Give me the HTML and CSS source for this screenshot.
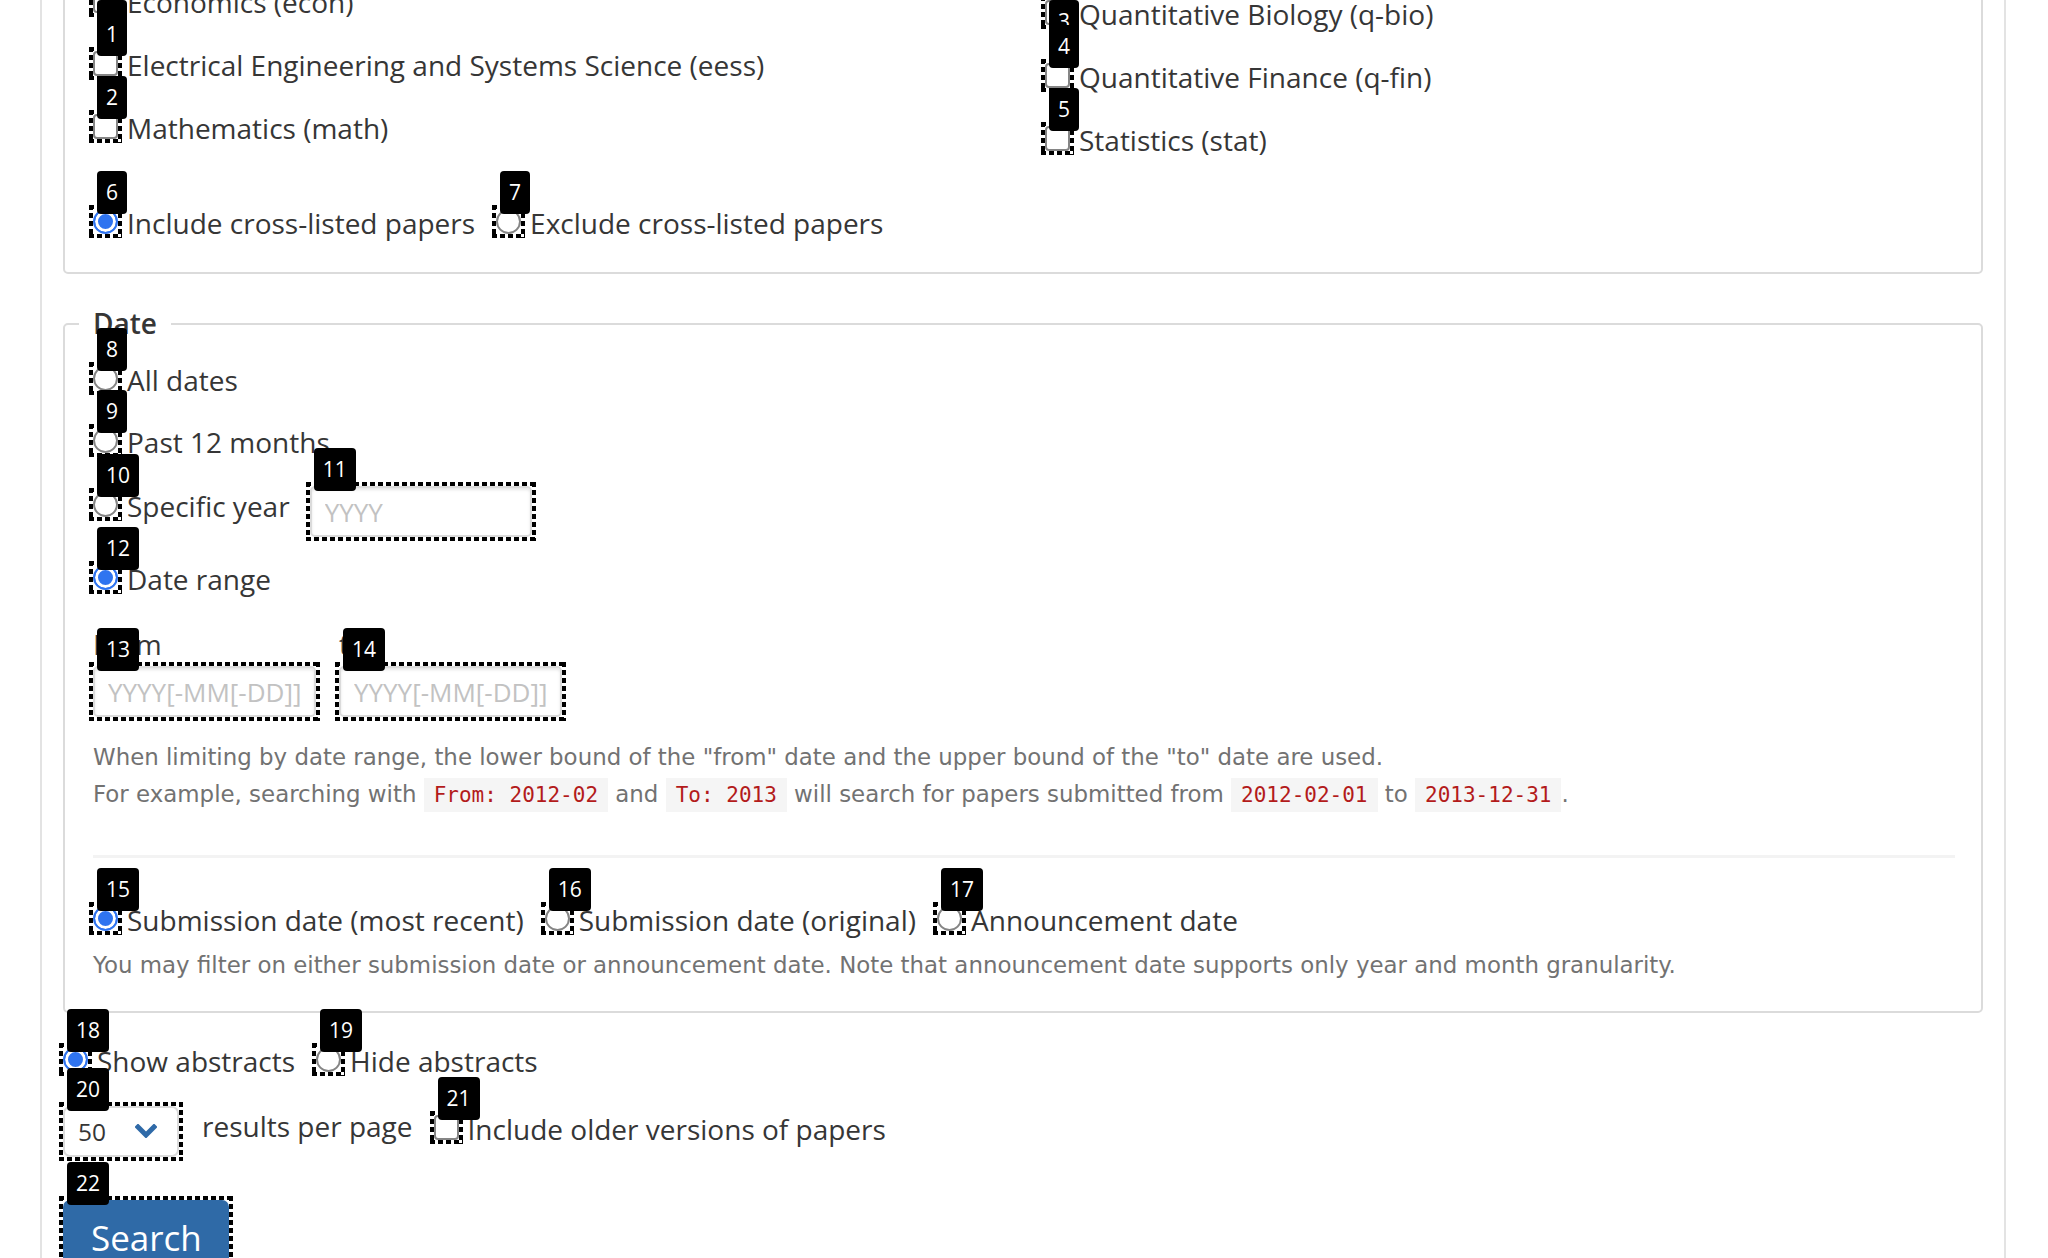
FILE: index.html
```html
<!DOCTYPE html>
<html lang="en">
<head>
<meta charset="utf-8">
<title>Advanced Search</title>
<link rel="stylesheet" href="styles.css">
</head>
<body>
<div class="page">
  <fieldset class="box subjects">
    <div class="cols">
      <div class="col">
        <label class="row"><span class="mk c"><input type="checkbox" class="ctl"><span class="badge pin-a">0</span></span><span>Economics (econ)</span></label>
        <label class="row"><span class="mk c"><input type="checkbox" class="ctl"><span class="badge">1</span></span><span>Electrical Engineering and Systems Science (eess)</span></label>
        <label class="row"><span class="mk c"><input type="checkbox" class="ctl"><span class="badge">2</span></span><span>Mathematics (math)</span></label>
      </div>
      <div class="col col-right">
        <label class="row"><span class="mk c"><input type="checkbox" class="ctl"><span class="badge pin-b">3</span></span><span>Quantitative Biology (q-bio)</span></label>
        <label class="row"><span class="mk c"><input type="checkbox" class="ctl"><span class="badge">4</span></span><span>Quantitative Finance (q-fin)</span></label>
        <label class="row"><span class="mk c"><input type="checkbox" class="ctl"><span class="badge">5</span></span><span>Statistics (stat)</span></label>
      </div>
    </div>
    <div class="opts cross">
      <label class="opt"><span class="mk c"><input type="radio" name="cross" class="ctl" checked><span class="badge">6</span></span><span>Include cross-listed papers</span></label>
      <label class="opt"><span class="mk c"><input type="radio" name="cross" class="ctl"><span class="badge">7</span></span><span>Exclude cross-listed papers</span></label>
    </div>
  </fieldset>

  <fieldset class="box dates">
    <legend>Date</legend>
    <label class="row"><span class="mk c"><input type="radio" name="date" class="ctl"><span class="badge">8</span></span><span>All dates</span></label>
    <label class="row d2"><span class="mk c"><input type="radio" name="date" class="ctl"><span class="badge">9</span></span><span>Past 12 months</span></label>
    <div class="opts d3">
      <label class="opt"><span class="mk c"><input type="radio" name="date" class="ctl"><span class="badge">10</span></span><span>Specific year</span></label>
      <span class="mk year"><input type="text" class="txt txt-year" placeholder="YYYY"><span class="badge">11</span></span>
    </div>
    <label class="row d4"><span class="mk c"><input type="radio" name="date" class="ctl" checked><span class="badge">12</span></span><span>Date range</span></label>
    <div class="range">
      <div class="fld">
        <label class="flabel">From</label>
        <span class="mk"><input type="text" class="txt" placeholder="YYYY[-MM[-DD]]"><span class="badge">13</span></span>
      </div>
      <div class="fld">
        <label class="flabel">to</label>
        <span class="mk"><input type="text" class="txt" placeholder="YYYY[-MM[-DD]]"><span class="badge">14</span></span>
      </div>
    </div>
    <p class="help h1">When limiting by date range, the lower bound of the "from" date and the upper bound of the "to" date are used.<br>For example, searching with <code>From: 2012-02</code> and <code>To: 2013</code> will search for papers submitted from <code>2012-02-01</code> to <code>2013-12-31</code>.</p>
    <hr class="sep">
    <div class="opts">
      <label class="opt"><span class="mk c"><input type="radio" name="dtype" class="ctl" checked><span class="badge">15</span></span><span>Submission date (most recent)</span></label>
      <label class="opt"><span class="mk c"><input type="radio" name="dtype" class="ctl"><span class="badge">16</span></span><span>Submission date (original)</span></label>
      <label class="opt"><span class="mk c"><input type="radio" name="dtype" class="ctl"><span class="badge">17</span></span><span>Announcement date</span></label>
    </div>
    <p class="help h2">You may filter on either submission date or announcement date. Note that announcement date supports only year and month granularity.</p>
  </fieldset>

  <div class="opts abs">
    <label class="opt"><span class="mk c"><input type="radio" name="abs" class="ctl" checked><span class="badge">18</span></span><span>Show abstracts</span></label>
    <label class="opt"><span class="mk c"><input type="radio" name="abs" class="ctl"><span class="badge">19</span></span><span>Hide abstracts</span></label>
  </div>

  <div class="size-row">
    <span class="mk sel-wrap">
      <select class="sel"><option>25</option><option selected>50</option><option>100</option><option>200</option></select>
      <svg class="chev" width="22" height="14" viewBox="0 0 22 14" aria-hidden="true"><polyline points="3,3 11,11 19,3" fill="none" stroke="#2f6aa8" stroke-width="5" stroke-linecap="square"/></svg>
      <span class="badge">20</span>
    </span>
    <span class="per">results per page</span>
    <label class="opt older"><span class="mk c"><input type="checkbox" class="ctl"><span class="badge">21</span></span><span>Include older versions of papers</span></label>
  </div>

  <div class="btn-row">
    <span class="mk"><button type="button" class="btn">Search</button><span class="badge">22</span></span>
  </div>
</div>
</body>
</html>
```

FILE: styles.css
```css
* { box-sizing: border-box; }
html, body { margin: 0; padding: 0; background: #fff; }
body {
  font-family: "Open Sans", "Noto Sans", sans-serif;
  font-size: 28px;
  color: #363636;
  overflow: hidden;
}
.page {
  margin-left: 40px;
  width: 1966px;
  min-height: 1400px;
  border-left: 2px solid #e3e3e3;
  border-right: 2px solid #e3e3e3;
  padding: 0 21px;
}
.box {
  margin: 0;
  min-width: 0;
  border: 2px solid #dbdbdb;
  border-radius: 5px;
  padding: 0 26px 0 28px;
}
.subjects { margin-top: -60px; padding-top: 43px; padding-bottom: 31px; }
.cols { display: grid; grid-template-columns: 952px 1fr; }
.col { display: flex; flex-direction: column; }
.col-right { padding-top: 12px; }
.col .row + .row { margin-top: 28px; }

.row, .opt {
  display: flex;
  align-items: flex-start;
  height: 35px;
  line-height: 35px;
  white-space: nowrap;
}
.opts { display: flex; align-items: flex-start; }
.opt + .opt { margin-left: 21px; }
.cross { margin-top: 48px; }

/* marked controls */
.mk { position: relative; display: inline-flex; flex: none; }
.mk.c { margin: 3px 9px 0 0; }
.mk::before {
  content: "";
  position: absolute;
  top: -4px; left: -4px; right: -4px; bottom: -4px;
  pointer-events: none;
  background:
    repeating-linear-gradient(90deg, #000 0 5px, transparent 5px 8px) left top / 100% 4px no-repeat,
    repeating-linear-gradient(90deg, #000 0 5px, transparent 5px 8px) left bottom / 100% 4px no-repeat,
    repeating-linear-gradient(180deg, #000 0 5px, transparent 5px 8px) left top / 4px 100% no-repeat,
    repeating-linear-gradient(180deg, #000 0 5px, transparent 5px 8px) right top / 4px 100% no-repeat;
}
.badge {
  position: absolute;
  left: 4px;
  top: -38px;
  height: 43px;
  min-width: 30px;
  padding: 0 9px;
  background: #000;
  color: #fff;
  border-radius: 4px;
  font-family: "Open Sans", sans-serif;
  font-size: 21px;
  line-height: 43px;
  text-align: center;
  white-space: nowrap;
  z-index: 2;
}
.badge.pin-a { top: 12px; }
.badge.pin-b { top: 0; }

.ctl {
  -webkit-appearance: none;
  appearance: none;
  display: block;
  width: 25px;
  height: 25px;
  margin: 0;
  background: #fff;
  border: 2px solid #858585;
}
.ctl[type="checkbox"] { border-radius: 4px; }
.ctl[type="radio"] { border-radius: 50%; }
.ctl[type="radio"]:checked {
  border-color: #2f74f0;
  background: #2f74f0;
  box-shadow: inset 0 0 0 3px #fff;
}

/* date fieldset */
.dates { margin-top: 32px; padding-top: 22px; padding-bottom: 27px; }
.dates legend {
  font-weight: 600;
  line-height: 35px;
  padding: 0 14px;
  margin-left: -14px;
}
.d2 { margin-top: 27px; }
.d3 { margin-top: 29px; }
.d3 .opt { margin-right: 20px; }
.mk.year { margin-top: -3px; }
.d4 { margin-top: 25px; }

.txt {
  display: block;
  width: 223px;
  height: 51px;
  margin: 0;
  border: 2px solid #dbdbdb;
  border-radius: 5px;
  box-shadow: inset 0 2px 3px rgba(10, 10, 10, 0.1);
  padding: 0 13px;
  font-family: "Open Sans", sans-serif;
  font-size: 26px;
  color: #363636;
  background: #fff;
  outline: none;
}
.txt-year { width: 222px; }
.txt::placeholder { color: #c2c2c2; }

.range { display: flex; gap: 23px; margin-top: 30px; }
.fld { display: flex; flex-direction: column; align-items: flex-start; }
.flabel { display: block; line-height: 35px; height: 35px; margin-bottom: 4px; }

.help {
  margin: 0;
  font-family: "DejaVu Sans", sans-serif;
  font-size: 22.9px;
  line-height: 37px;
  color: #727272;
}
.h1 { margin-top: 22px; }
.h2 { margin-top: 9px; }
.help code {
  font-family: "DejaVu Sans Mono", monospace;
  font-size: 21px;
  background: #f5f5f5;
  color: #b31b1b;
  padding: 5px 10px;
}
.sep {
  border: 0;
  height: 3px;
  background: #f3f3f3;
  margin: 41px 0 45px;
}

/* below form */
.abs { margin-top: 31px; }
.size-row { display: flex; align-items: flex-start; margin-top: 27px; }
.sel-wrap { margin-right: 23px; }
.sel {
  -webkit-appearance: none;
  appearance: none;
  display: block;
  width: 116px;
  height: 51px;
  margin: 0;
  border: 2px solid #dbdbdb;
  border-radius: 7px;
  background: #fff;
  padding: 0 13px;
  font-family: "Open Sans", sans-serif;
  font-size: 24.5px;
  color: #363636;
  outline: none;
}
.chev { position: absolute; right: 22px; top: 18px; pointer-events: none; }
.per { line-height: 35px; margin-top: 3px; white-space: nowrap; }
.older { margin-left: 21px; margin-top: 6px; }

.btn-row { display: flex; margin-top: 43px; }
.btn {
  display: block;
  margin: 0;
  border: 0;
  border-radius: 7px;
  background: #2f6aa7;
  color: #fff;
  font-family: "Open Sans", sans-serif;
  font-size: 35px;
  line-height: 52px;
  padding: 12px 27px 12px 28px;
  cursor: pointer;
}
```
